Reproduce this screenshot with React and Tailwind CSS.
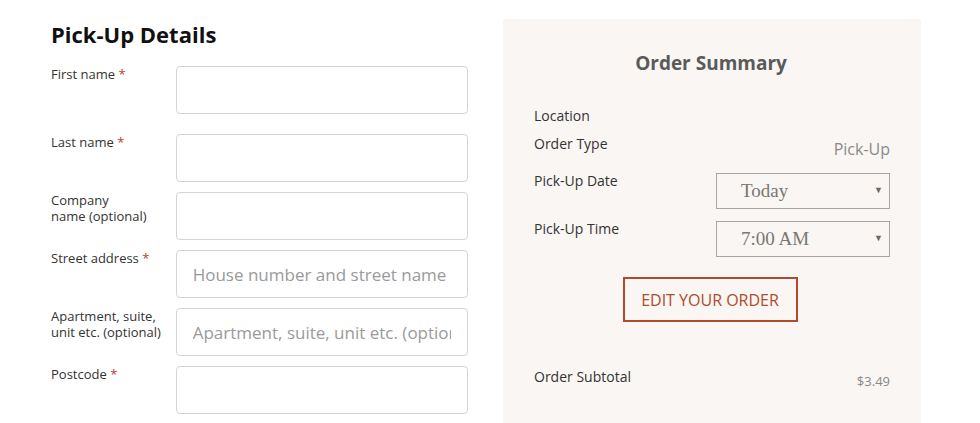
import React from 'react';

const font = { fontFamily: '"Open Sans", "Noto Sans", sans-serif' };

const fields = [
  { label: ['First name'], required: true },
  { label: ['Last name'], required: true },
  { label: ['Company', 'name (optional)'] },
  { label: ['Street address'], required: true, placeholder: 'House number and street name' },
  { label: ['Apartment, suite,', 'unit etc. (optional)'], placeholder: 'Apartment, suite, unit etc. (optional)' },
  { label: ['Postcode'], required: true },
];

const Field = ({ label, required, placeholder, first }) => (
  <div className={`flex items-start ${first ? 'mb-[20px]' : 'mb-[10px]'}`}>
    <label className="w-[125px] pr-2 text-[13px] leading-4 text-[#333]">
      {label.map((line, i) => (
        <span key={i} className="block">
          {line}
          {required && i === label.length - 1 && <span className="text-[#c0392b]"> *</span>}
        </span>
      ))}
    </label>
    <input
      type="text"
      placeholder={placeholder}
      className="w-[293px] h-[48px] rounded-[4px] border border-[#d4d4d4] bg-white px-4 text-[17px] text-[#333] outline-none placeholder:text-[#9a9a9a]"
      style={font}
    />
  </div>
);

const Select = ({ value }) => (
  <div className="relative mt-[2px] w-[174px] h-[36px] border border-[#aaa5a0] bg-[#f9f6f3] flex items-center pl-6">
    <span className="text-[19px] text-[#7a7774]" style={{ fontFamily: '"Liberation Serif", serif' }}>
      {value}
    </span>
    <span className="absolute right-[6px] top-[9px] text-[9px] text-[#6b6865]">▼</span>
  </div>
);

export default function App() {
  return (
    <div className="bg-white w-full h-[423px] overflow-hidden" style={font}>
      <div className="flex gap-[35px] pl-[51px] pt-[19px]">
        {/* Pick-up form */}
        <div className="w-[417px]">
          <h2 className="text-[22px] font-bold leading-[30px] text-[#111] mb-[17px]">Pick-Up Details</h2>
          {fields.map((f, i) => (
            <Field key={i} {...f} first={i === 0} />
          ))}
        </div>

        {/* Order summary */}
        <div className="w-[418px] bg-[#f9f6f3] px-[31px] pt-[30px] pb-[60px]">
          <h3 className="text-center text-[19px] font-bold leading-7 text-[#5a5a5a] mr-[2px]">Order Summary</h3>

          <div className="mt-[29px] text-[14px] leading-5 text-[#333]">Location</div>

          <div className="mt-[8px] flex justify-between items-start">
            <span className="text-[14px] leading-5 text-[#333]">Order Type</span>
            <span className="mt-[3px] text-[16px] leading-6 text-[#8a8a8a]">Pick-Up</span>
          </div>

          <div className="mt-[10px] flex justify-between items-start">
            <span className="text-[14px] leading-5 text-[#333]">Pick-Up Date</span>
            <Select value="Today" />
          </div>

          <div className="mt-[10px] flex justify-between items-start">
            <span className="text-[14px] leading-5 text-[#333]">Pick-Up Time</span>
            <Select value="7:00 AM" />
          </div>

          <div className="mt-[20px] flex justify-center">
            <button className="w-[175px] h-[45px] border-2 border-[#b14a2c] text-[16px] text-[#b14a2c] mr-[4px]">
              EDIT YOUR ORDER
            </button>
          </div>

          <div className="mt-[45px] flex justify-between items-start">
            <span className="text-[14px] leading-5 text-[#333]">Order Subtotal</span>
            <span className="mt-[4px] text-[13px] leading-5 text-[#888]">$3.49</span>
          </div>
        </div>
      </div>
    </div>
  );
}
